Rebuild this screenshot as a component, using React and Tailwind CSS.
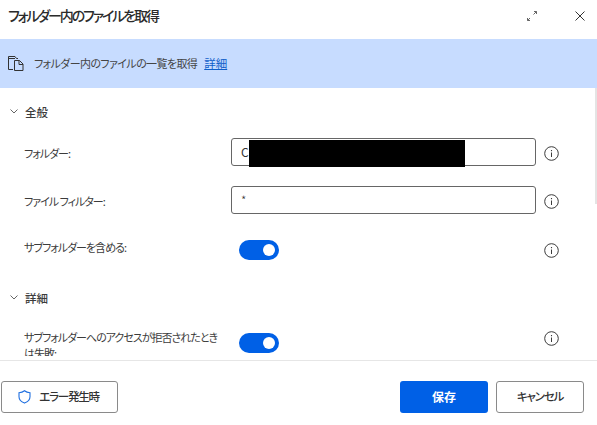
const Info = () => (
  <svg width="15" height="15" viewBox="0 0 15 15" fill="none" stroke="#3b3b3b" className="shrink-0">
    <circle cx="7.5" cy="7.5" r="6.8" strokeWidth="1" />
    <path d="M7.5 6.500v4.500" strokeWidth="1" />
    <path d="M7.500 4v1.200" strokeWidth="1.100" />
  </svg>
);

const Chevron = () => (
  <svg width="8" height="5" viewBox="0 0 8 5" fill="none" stroke="#555" strokeWidth="0.9" className="mb-[3px] shrink-0">
    <path d="M.5.5 4 4 7.500.5" />
  </svg>
);

const Toggle = () => (
  <div className="flex h-5 w-10 items-center justify-end rounded-full bg-[#0060e6] pr-[4px]">
    <div className="size-3 rounded-full bg-white" />
  </div>
);

function Row({ label, height, children, className, labelClass, infoClass }) {
  return (
    <div className={`flex items-center pl-6 ${height} ${className || ''}`}>
      <div className={`w-[207px] shrink-0 text-[11px] leading-[18px] tracking-[-1px] text-[#3c3c3c] ${labelClass || ''}`}>{label}</div>
      <div className="w-[305px] shrink-0">{children}</div>
      <div className={`ml-[8px] ${infoClass || ''}`}><Info /></div>
    </div>
  );
}

export default function App() {
  return (
    <div className="relative flex h-[425px] w-[597px] flex-col overflow-hidden bg-white [font-family:'Noto_Sans_CJK_JP','Noto_Sans',sans-serif] [font-feature-settings:'palt']">
      {/* Header */}
      <div className="flex h-[39px] shrink-0 items-center justify-between pb-2 pl-2 pr-[12px]">
        <h1 className="text-[14px] font-medium tracking-[-2.1px] text-[#2b2b2b]">フォルダー内のファイルを取得</h1>
        <div className="flex items-center gap-[38px]">
          <svg width="10" height="10" viewBox="0 0 10 10" fill="none" stroke="#666" strokeWidth="1">
            <path d="M.5 9.500 3 7M6.500 3.500 9.500.5M7 .5h2.500V3M.5 7v2.500H3" />
          </svg>
          <svg width="10" height="10" viewBox="0 0 10 10" fill="none" stroke="#333" strokeWidth="1">
            <path d="M.5.5l9 9M9.500.5l-9 9" />
          </svg>
        </div>
      </div>

      {/* Banner */}
      <div className="flex h-[49px] shrink-0 items-center bg-[#c7dcff] pl-2">
        <svg width="16" height="15" viewBox="0 0 16 15" fill="none" stroke="#333" strokeWidth="1" className="shrink-0">
          <path d="M5 13.500H.5V.5h6.500l1.500 2h1.500" />
          <path d="M.5 2.500h6.500" />
          <path d="M6.500 4.500h5l3.500 3.500v6.500H6.500z" />
          <path d="M11 4.500V8.500h4" />
        </svg>
        <span className="ml-[10px] text-[11px] tracking-[-0.6px] text-[#444]">フォルダー内のファイルの一覧を取得</span>
        <a className="ml-[7px] text-[11.5px] text-[#0f5fc9] underline">詳細</a>
      </div>

      {/* Scrolling body */}
      <div className="relative mb-[4px] h-[268px] shrink-0 overflow-hidden">
        <div className="flex h-[50px] items-center gap-[7px] pl-[10px]">
          <Chevron />
          <span className="text-[11.5px] font-medium text-[#3c3c3c]">全般</span>
        </div>
        <Row label="フォルダー:" height="h-[28px]" labelClass="pt-px" infoClass="pt-[2px]">
          <div className="flex h-[28px] items-center rounded-[3px] border border-[#666] pl-[9px] text-[12px] text-[#333]">C</div>
        </Row>
        <Row label="ファイル フィルター:" height="h-[28px]" className="mt-[20px]" labelClass="pt-px" infoClass="pt-[2px]">
          <div className="flex h-[28px] items-center rounded-[3px] border border-[#666] pl-[9px] text-[12px] font-light text-[#333]">*</div>
        </Row>
        <Row label="サブフォルダーを含める:" height="h-[20px]" className="mt-[26px]" labelClass="pb-[6px]">
          <div className="pl-2"><Toggle /></div>
        </Row>
        <div className="mt-[16px] flex h-[46px] items-center gap-[7px] pl-[10px]">
          <Chevron />
          <span className="text-[11.5px] font-medium text-[#3c3c3c]">詳細</span>
        </div>
        <div className="flex items-start pl-6">
          <div className="mt-[7px] w-[207px] shrink-0 text-[11px] leading-[16px] tracking-[-1px] text-[#3c3c3c]">
            <div className="w-[200px]">サブフォルダーへのアクセスが拒否されたときは失敗:</div>
          </div>
          <div className="mt-[11px] w-[305px] shrink-0 pl-2"><Toggle /></div>
          <div className="ml-[8px] mt-[9px]"><Info /></div>
        </div>
        <div className="absolute left-[249px] top-[52px] h-[27px] w-[216px] bg-black" />
        <div className="absolute right-0 top-0 h-[116px] w-[2px] bg-[#e4e4e4]" />
      </div>

      {/* Footer */}
      <div className="flex flex-1 items-center justify-between border-t border-[#e6e6e6] pl-px pr-[13px] pt-2">
        <button className="flex h-[32px] w-[117px] items-center justify-center gap-[8px] rounded-[3px] border border-[#8a8a8a] pr-[2px] text-[11.5px] font-medium tracking-[-1.2px] text-[#333]">
          <svg width="13" height="14" viewBox="0 0 13 14" fill="none" stroke="#1f6fe0" strokeWidth="1.1">
            <path d="M6.500.8c1.500 1.200 3.300 1.800 5.500 1.900v4c0 2.900-2 5-5.500 6.400C3 11.700 1 9.600 1 6.700v-4C3.200 2.600 5 2 6.500.8z" />
          </svg>
          エラー発生時
        </button>
        <div className="flex gap-2">
          <button className="h-[32px] w-[88px] rounded-[3px] bg-[#0060e6] text-[12px] font-bold text-white">保存</button>
          <button className="h-[32px] w-[88px] rounded-[3px] border border-[#8a8a8a] text-[11.5px] font-medium tracking-[-1.2px] text-[#333]">キャンセル</button>
        </div>
      </div>
    </div>
  );
}
